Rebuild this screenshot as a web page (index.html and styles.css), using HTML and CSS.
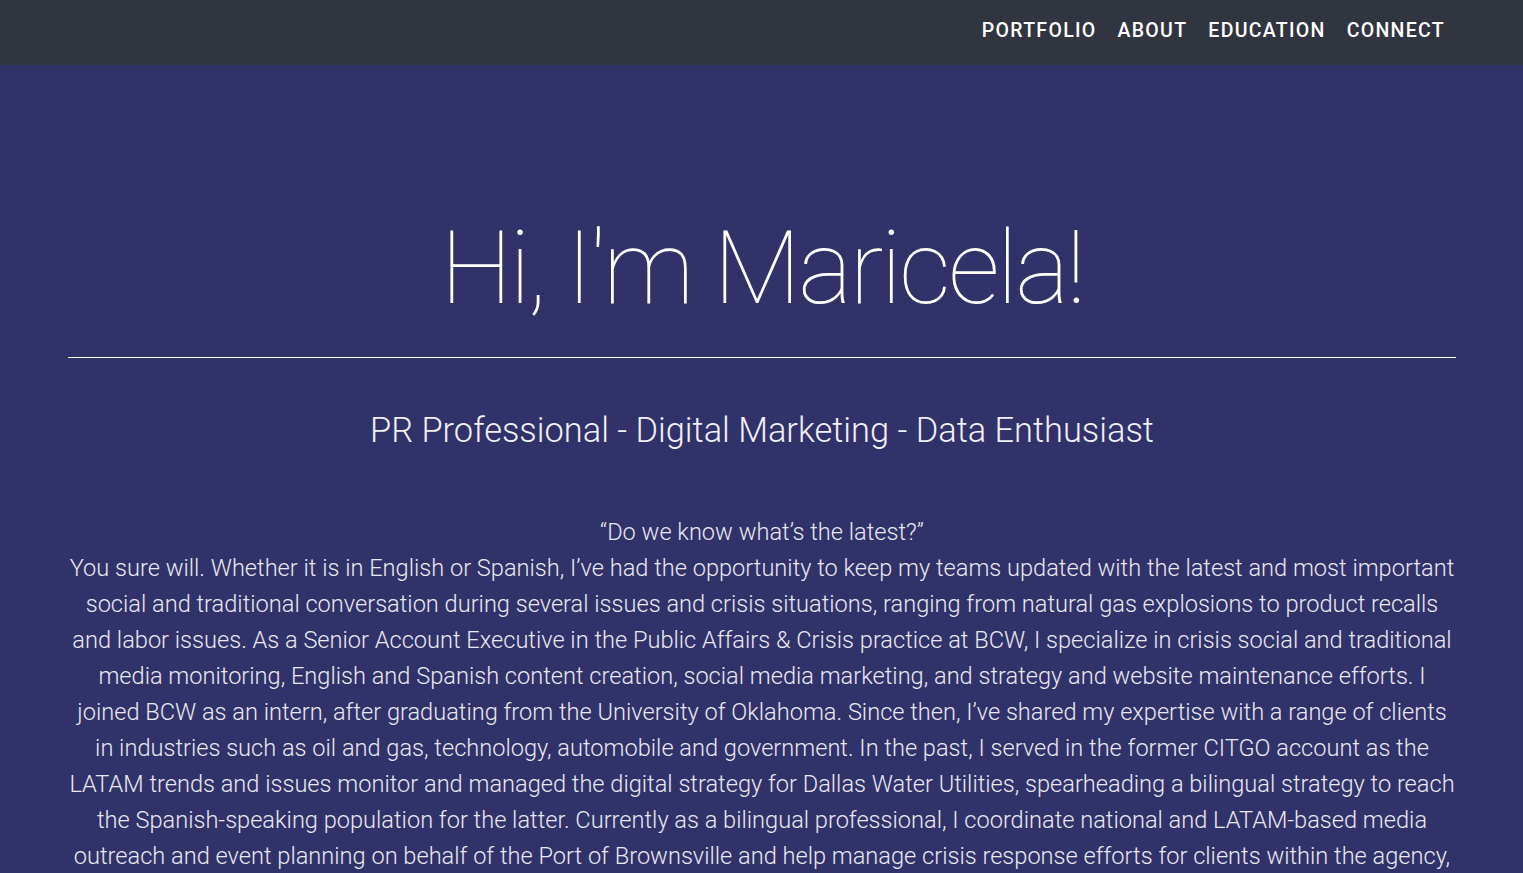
FILE: index.html
```html
<!DOCTYPE html>
<html lang="en">
<head>
<meta charset="utf-8">
<title>Maricela</title>
<link rel="stylesheet" href="styles.css">
</head>
<body>
<nav class="navbar">
  <ul class="nav-links">
    <li><a href="#portfolio">Portfolio</a></li>
    <li><a href="#about">About</a></li>
    <li><a href="#education">Education</a></li>
    <li><a href="#connect">Connect</a></li>
  </ul>
</nav>
<header class="hero">
  <div class="container">
    <h1 class="title">Hi, I'm Maricela!</h1>
    <hr class="divider">
    <h2 class="subtitle">PR Professional - Digital Marketing - Data Enthusiast</h2>
    <p class="intro">“Do we know what’s the latest?”<br>You sure will. Whether it is in English or Spanish, I’ve had the opportunity to keep my teams updated with the latest and most important social and traditional conversation during several issues and crisis situations, ranging from natural gas explosions to product recalls and labor issues. As a Senior Account Executive in the Public Affairs &amp; Crisis practice at BCW, I specialize in crisis social and traditional media monitoring, English and Spanish content creation, social media marketing, and strategy and website maintenance efforts. I joined BCW as an intern, after graduating from the University of Oklahoma. Since then, I’ve shared my expertise with a range of clients in industries such as oil and gas, technology, automobile and government. In the past, I served in the former CITGO account as the LATAM trends and issues monitor and managed the digital strategy for Dallas Water Utilities, spearheading a bilingual strategy to reach the Spanish-speaking population for the latter. Currently as a bilingual professional, I coordinate national and LATAM-based media outreach and event planning on behalf of the Port of Brownsville and help manage crisis response efforts for clients within the agency, among others.</p>
  </div>
</header>
</body>
</html>
```
FILE: styles.css
```css
* { box-sizing: border-box; }
html, body {
  margin: 0;
  padding: 0;
}
body {
  font-family: Roboto, "Liberation Sans", sans-serif;
  background: #31326a;
  color: #ffffff;
}
.navbar {
  background: #31353f;
  height: 65px;
  display: flex;
  justify-content: flex-end;
  align-items: center;
  padding-right: 78px;
}
.nav-links {
  list-style: none;
  margin: 0;
  padding: 0;
  display: flex;
  gap: 21px;
}
.nav-links a {
  color: #ffffff;
  text-decoration: none;
  text-transform: uppercase;
  font-weight: 500;
  font-size: 19.5px;
  letter-spacing: 1.3px;
  line-height: 1;
  display: block;
  margin-top: -4px;
}
.hero {
  background: #31326a;
  padding-top: 152px;
  padding-bottom: 60px;
}
.container {
  margin: 0 67px 0 68px;
  text-align: center;
}
.title {
  margin: 0;
  font-weight: 100;
  font-size: 102px;
  line-height: 1;
  letter-spacing: -2.7px;
}
.divider {
  border: 0;
  border-top: 1px solid #ffffff;
  margin: 38px 0 0 0;
  height: 0;
}
.subtitle {
  margin: 52px 0 0 0;
  font-weight: 300;
  font-size: 34.4px;
  line-height: 40px;
  color: #f0f0f5;
}
.intro {
  margin: 64px 0 0 0;
  font-weight: 300;
  font-size: 23.6px;
  line-height: 36px;
  color: #e8e8f0;
}
```
